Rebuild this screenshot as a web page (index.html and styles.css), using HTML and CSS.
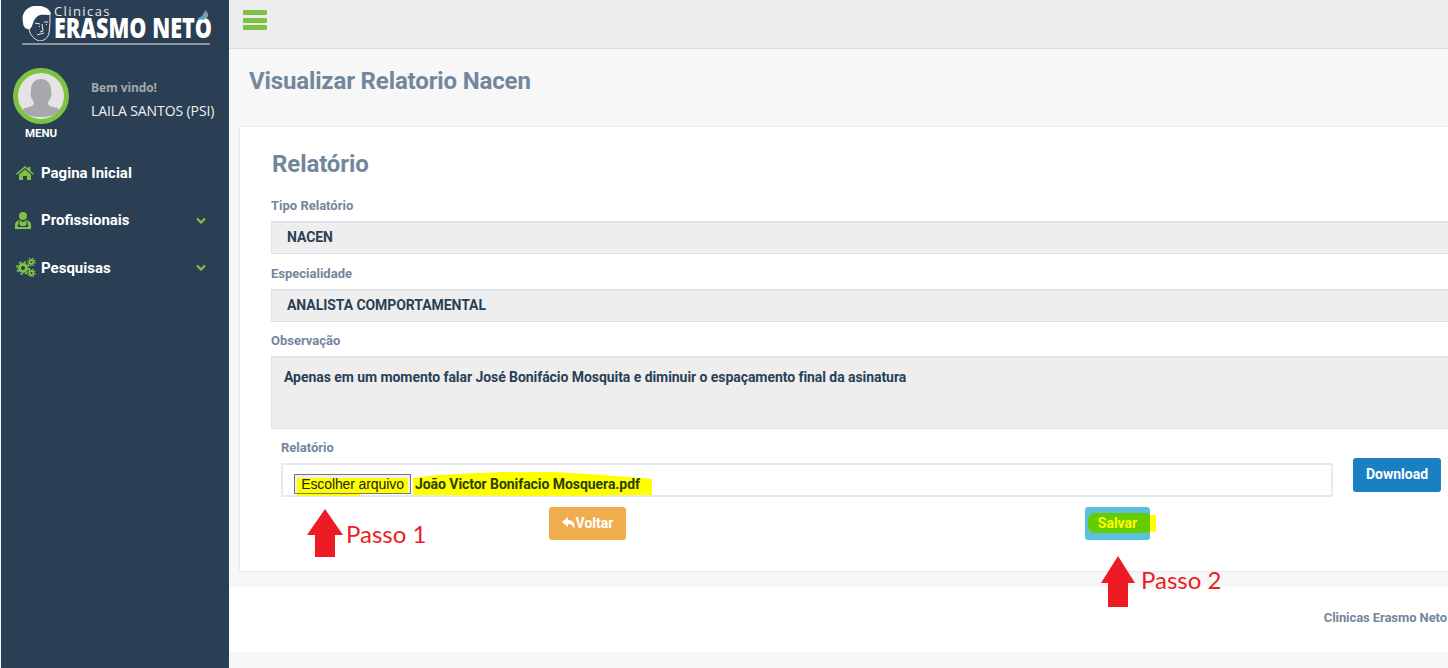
FILE: index.html
```html
<!DOCTYPE html>
<html lang="pt">
<head>
<meta charset="utf-8">
<title>Visualizar Relatorio Nacen</title>
<link rel="stylesheet" href="styles.css">
</head>
<body>
<div class="app">
  <aside class="sidebar">
    <div class="logo">
      <svg class="logo-face" viewBox="0 0 30 35" width="30" height="35">
        <path d="M1 16C-1 8 4 1 12 0c8-1 16 2 17 8-2 2-7 0-11 1-3 1-6 4-7 8-1 4-3 7-5 6-3 0-5-3-5-7z" fill="#fff"/>
        <path d="M7 23c1 6 5 10 10 12 5 0 9-3 10-8 1-7 1-13 1-18" fill="none" stroke="#fff" stroke-width="0.9"/>
        <path d="M13 17l5 1M22 16l4 0M20 18l1 7-3 1M15 29l7-2M18 20l-1 1M24 18l1 1" fill="none" stroke="#fff" stroke-width="0.9"/>
      </svg>
      <div class="logo-text">
        <div class="logo-small">Clinicas</div>
        <div class="logo-big">ERASMO NETO</div>
      </div>
      <svg class="logo-bird" viewBox="0 0 12 11" width="12" height="11">
        <path d="M0 9l5-3 3-5 3 2-1 5-4 2z" fill="#5ba4cf"/>
        <path d="M8 1l1-1 1 2zM8 5l3-1 0 3z" fill="#e8883a"/>
      </svg>
    </div>
    <div class="profile">
      <div class="avatar-col">
        <div class="avatar">
          <svg viewBox="0 0 46 46" width="46" height="46">
            <path d="M23 6c6 0 10 4 10 11 0 3 1 4 0 7-1 2-2 3-3 6 0 3 5 4 9 5 2 1 3 2 3 4-5 3-11 5-19 5s-14-2-19-5c0-2 1-3 3-4 4-1 9-2 9-5-1-3-2-4-3-6-1-3 0-4 0-7 0-7 4-11 10-11z" fill="#a6a8ab"/>
          </svg>
        </div>
        <div class="menu-label">MENU</div>
      </div>
      <div class="welcome">
        <div class="welcome-hi">Bem vindo!</div>
        <div class="welcome-name">LAILA SANTOS (PSI)</div>
      </div>
    </div>
    <nav class="nav">
      <a class="nav-item">
        <svg class="nav-icon" viewBox="0 0 18 14" width="18" height="14"><path d="M9 0l3 2.600V1h2.400v3.700L18 7.800l-1 1-8-6.800-8 6.800-1-1zM9 3.400l6 5V14h-4v-4H7v4H3V8.400z" fill="#7dc242"/></svg>
        <span class="nav-text">Pagina Inicial</span>
      </a>
      <a class="nav-item">
        <svg class="nav-icon nav-icon-doc" viewBox="0 0 16 17" width="16" height="17"><circle cx="8" cy="4" r="4" fill="#7dc242"/><path d="M0 17v-4c0-3 2-4 4-5l4 2 4-2c2 1 4 2 4 5v4z" fill="#7dc242"/><path d="M4 9v3M12 9v3M3 14.500h10" stroke="#2a3f54" stroke-width="1" fill="none"/><circle cx="4" cy="13.500" r="1.300" fill="#2a3f54"/><circle cx="12" cy="13.500" r="1.300" fill="#2a3f54"/></svg>
        <span class="nav-text">Profissionais</span>
        <svg class="nav-chev" viewBox="0 0 10 7" width="10" height="7"><path d="M1 1.500l4 4 4-4" fill="none" stroke="#7dc242" stroke-width="2.200"/></svg>
      </a>
      <a class="nav-item">
        <svg class="nav-icon" viewBox="0 0 20 19" width="20" height="19"><g fill="none" stroke="#7dc242"><circle cx="7" cy="10" r="3.500" stroke-width="3"/><circle cx="7" cy="10" r="6" stroke-width="1.800" stroke-dasharray="2.400 2.300"/><circle cx="15.500" cy="4" r="2" stroke-width="1.800"/><circle cx="15.500" cy="4" r="3.700" stroke-width="1.300" stroke-dasharray="1.500 1.400"/><circle cx="15.500" cy="15" r="2" stroke-width="1.800"/><circle cx="15.500" cy="15" r="3.700" stroke-width="1.300" stroke-dasharray="1.500 1.400"/></g></svg>
        <span class="nav-text">Pesquisas</span>
        <svg class="nav-chev" viewBox="0 0 10 7" width="10" height="7"><path d="M1 1.500l4 4 4-4" fill="none" stroke="#7dc242" stroke-width="2.200"/></svg>
      </a>
    </nav>
  </aside>
  <main class="main">
    <header class="topbar">
      <div class="burger"><span></span><span></span><span></span></div>
    </header>
    <div class="page-title"><h1>Visualizar Relatorio Nacen</h1></div>
    <section class="card">
      <h2>Relatório</h2>
      <label class="label">Tipo Relatório</label>
      <div class="field">NACEN</div>
      <label class="label">Especialidade</label>
      <div class="field">ANALISTA COMPORTAMENTAL</div>
      <label class="label">Observação</label>
      <div class="field field-area">Apenas em um momento falar José Bonifácio Mosquita e diminuir o espaçamento final da asinatura</div>
      <div class="upload">
        <div class="upload-main">
          <label class="label">Relatório</label>
          <div class="file-box">
            <svg class="marker" viewBox="281 463 380 36" width="380" height="36">
              <rect x="294" y="474" width="117" height="20" fill="#efefef"/>
              <path d="M297 478H408V493H360V496H297z" fill="#ffff00"/>
              <path d="M413 478L437 475 500 472 557 472 603 475 652 479V495L537 496 413 495z" fill="#ffff00"/>
            </svg>
            <span class="file-btn">Escolher arquivo</span>
            <span class="file-name">João Victor Bonifacio Mosquera.pdf</span>
          </div>
        </div>
        <a class="btn btn-download">Download</a>
      </div>
      <div class="actions">
        <a class="btn btn-back">
          <svg viewBox="0 0 14 12" width="14" height="12"><path d="M6 0L0 5l6 5V7c3 0 5 1 6 5 2-5-1-9-6-9z" fill="#fff"/></svg>Voltar
        </a>
        <a class="btn btn-save"><span class="hl hl-save"></span><span class="hl hl-save2"></span><span class="save-text">Salvar</span></a>
      </div>
      <div class="note note-1">
        <svg viewBox="0 0 36 48" width="36" height="48"><path d="M18 0l18 26H28v22H8V26H0z" fill="#ed1c24"/></svg>
        <span>Passo 1</span>
      </div>
      <div class="note note-2">
        <svg viewBox="0 0 36 52" width="36" height="52"><path d="M18 0l17 27H28v24H8V27H1z" fill="#ed1c24"/></svg>
        <span>Passo 2</span>
      </div>
    </section>
    <footer class="footer">Clinicas Erasmo Neto</footer>
  </main>
</div>
</body>
</html>
```
FILE: styles.css
```css
* { box-sizing: border-box; }
html, body { margin: 0; height: 100%; overflow: hidden; }
body { font-family: Roboto, "Liberation Sans", sans-serif; background: #f7f7f7; color: #2a3f54; }
.app { display: flex; width: 1448px; height: 668px; overflow: hidden; }

.sidebar { flex: 0 0 228px; margin-left: 1px; background: #2a3f54; color: #fff; }
.logo { position: relative; display: flex; align-items: flex-start; gap: 2px; margin: 6px 19px 0 21px; height: 39px; border-bottom: 2px solid #8e97a1; }
.logo-face { flex: none; }
.logo-text { min-width: 0; width: 156px; }
.logo-small { font-family: "Open Sans", sans-serif; font-size: 13px; letter-spacing: 1.4px; line-height: 11px; color: #e6e6e6; }
.logo-big { font-family: "Open Sans", sans-serif; font-weight: 800; font-size: 28px; line-height: 21px; white-space: nowrap; width: 203px; transform: scaleX(0.77); transform-origin: left center; }
.logo-bird { position: absolute; left: 175px; top: 4px; }

.profile { display: flex; align-items: flex-start; margin-top: 23px; padding-left: 12px; height: 81px; }
.avatar-col { width: 56px; display: flex; flex-direction: column; align-items: center; }
.avatar { width: 56px; height: 56px; border-radius: 50%; border: 5px solid #7dc242; overflow: hidden; background: #e4e4e4; }
.avatar svg { display: block; }
.menu-label { font-size: 11.5px; font-weight: 700; line-height: 13px; margin-top: 3px; }
.welcome { margin-left: 22px; font-family: "Open Sans", sans-serif; padding-top: 12px; }
.welcome-hi { font-size: 12px; font-weight: 700; color: #a5a9ae; line-height: 16px; letter-spacing: -0.1px; }
.welcome-name { font-size: 14px; line-height: 18px; margin-top: 6px; color: #f0f0f0; white-space: nowrap; letter-spacing: -0.1px; }

.nav { display: flex; flex-direction: column; }
.nav-item { position: relative; display: flex; align-items: center; height: 47.5px; padding-left: 15px; color: #fff; }
.nav-icon { flex: none; }
.nav-icon-doc { margin-left: -1px; }
.nav-text { position: absolute; left: 40px; font-size: 15px; font-weight: 700; }
.nav-chev { position: absolute; right: 23px; }

.main { flex: 1 1 auto; min-width: 0; display: flex; flex-direction: column; position: relative; }
.topbar { flex: none; height: 49px; background: #ededed; border-bottom: 1px solid #d9dee4; padding: 10px 0 0 14px; }
.burger { display: flex; flex-direction: column; gap: 2.500px; width: 24px; }
.burger span { display: block; height: 5px; background: #7dc242; border-radius: 1px; }
.page-title { flex: none; height: 77px; padding: 17px 0 0 20px; }
h1 { margin: 0; font-size: 24px; line-height: 30px; font-weight: 700; color: #73879c; letter-spacing: -0.14px; }

.card { position: relative; flex: none; width: 1300px; height: 446px; margin-left: 10px; background: #fff; border: 1px solid #e6e9ed; padding: 22px 0 0 31px; }
h2 { margin: 0 0 20px 1px; font-size: 24px; line-height: 30px; font-weight: 700; color: #73879c; letter-spacing: -0.1px; }
.label { display: block; font-size: 13px; font-weight: 700; line-height: 14px; color: #73879c; }
.field { margin-top: 8px; margin-bottom: 12.500px; height: 33px; padding: 0 0 0 15px; background: #eeeeee; border: 1px solid #dfe3e8; border-top-width: 2px; font-size: 14px; font-weight: 700; line-height: 29px; letter-spacing: -0.06px; color: #2a3f54; }
.field-area { height: 73px; margin-bottom: 12px; padding: 0 0 0 12px; line-height: 39px; }

.upload { display: flex; align-items: flex-start; margin-left: 10px; }
.upload-main { width: 1052px; }
.file-box { position: relative; display: flex; align-items: flex-start; height: 34px; margin-top: 8px; padding: 9px 0 0 11px; border: 2px solid #e6e9ed; font-size: 14px; }
.marker { position: absolute; left: -2px; top: -2px; overflow: visible; }
.file-btn { position: relative; font-family: "Liberation Sans", sans-serif; height: 20px; width: 117px; flex: none; border: 1px solid #767676; font-size: 14px; letter-spacing: -0.1px; line-height: 18px; text-align: center; color: #222; }
.file-name { position: relative; margin-left: 4px; font-weight: 700; color: #2b3f00; font-size: 14px; letter-spacing: -0.06px; line-height: 20px; }
.hl { position: absolute; background: #ffff00; }

.btn { display: inline-flex; align-items: center; justify-content: center; padding-bottom: 2px; color: #fff; font-size: 14px; font-weight: 700; border-radius: 3px; }
.btn-download { flex: none; width: 88px; height: 34px; margin: 17px 0 0 20px; background: #1b80c3; }
.actions { position: relative; height: 34px; margin-top: 9px; }
.btn-back { position: absolute; left: 278px; top: 1px; width: 77px; height: 33px; background: #f0ad4e; }
.btn-save { position: absolute; left: 814px; top: 1px; width: 65px; height: 33px; background: #5bc0de; }
.hl-save { left: 3px; top: 6px; width: 62px; height: 20px; background: #66cc00; border-radius: 7px 4px 4px 7px; }
.hl-save2 { left: 65px; top: 8px; width: 6px; height: 17px; }
.save-text { position: relative; color: #ffff00; font-size: 14px; }

.note { position: absolute; display: flex; align-items: center; color: #ed1c24; font-family: Lato, sans-serif; font-size: 24px; }
.note-1 { left: 67px; top: 382px; gap: 3px; }
.note-2 { left: 860px; top: 429px; gap: 5px; }
.note-2 span { margin-top: -6px; }

.footer { flex: none; height: 65px; margin-top: 15px; background: #fff; padding: 24px 1px 0 0; font-size: 13px; font-weight: 700; line-height: 14px; letter-spacing: -0.08px; color: #73879c; text-align: right; }
```
